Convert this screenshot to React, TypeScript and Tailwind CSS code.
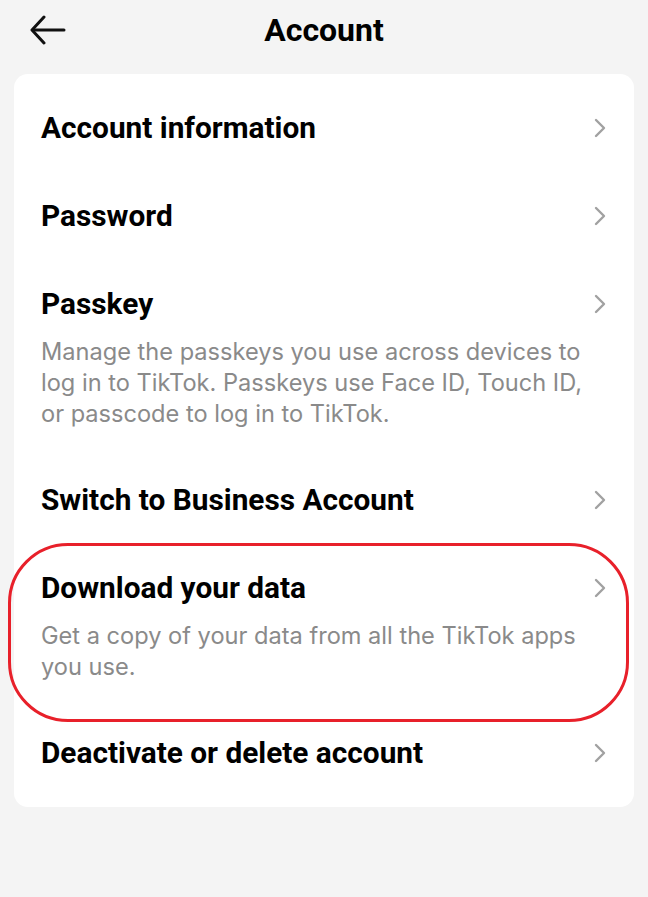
type Item = {
  title: string;
  desc?: string;
  highlight?: boolean;
};

const items: Item[] = [
  { title: 'Account information' },
  { title: 'Password' },
  {
    title: 'Passkey',
    desc: 'Manage the passkeys you use across devices to log in to TikTok. Passkeys use Face ID, Touch ID, or passcode to log in to TikTok.',
  },
  { title: 'Switch to Business Account' },
  {
    title: 'Download your data',
    desc: 'Get a copy of your data from all the TikTok apps you use.',
    highlight: true,
  },
  { title: 'Deactivate or delete account' },
];

function BackArrow() {
  return (
    <svg width="36" height="30" viewBox="0 0 36 30" fill="none" stroke="#111" strokeWidth="3" strokeLinecap="round" strokeLinejoin="round">
      <path d="M34 15H3" />
      <path d="M14 2L2 15l12 13" />
    </svg>
  );
}

function Chevron() {
  return (
    <svg width="12" height="20" viewBox="0 0 12 20" fill="none" stroke="#a1a1a1" strokeWidth="2.4" strokeLinecap="round" strokeLinejoin="round">
      <path d="M2 2l8 8-8 8" />
    </svg>
  );
}

export default function App() {
  return (
    <div className="min-h-[897px] w-full bg-[#f4f4f4] font-['Roboto',sans-serif] text-black">
      <header className="grid h-[60px] grid-cols-[1fr_auto_1fr] items-center">
        <button className="flex items-center pl-[30px]">
          <BackArrow />
        </button>
        <h1 className="text-[32px] font-bold leading-none">Account</h1>
        <div />
      </header>

      <div className="mx-[14px] mt-[14px] rounded-[14px] bg-white py-[10px]">
        {items.map((item) => (
          <div key={item.title} className="relative flex items-start py-[27px] pl-[27px] pr-[28px]">
            <div className="flex-1">
              <div className="text-[29.8px] font-bold leading-[34px]">{item.title}</div>
              {item.desc && (
                <p className="mt-[15px] max-w-[550px] font-['Inter',sans-serif] text-[23.6px] leading-[31px] text-[#8a8a8a]">
                  {item.desc}
                </p>
              )}
            </div>
            <div className="flex h-[34px] items-center">
              <Chevron />
            </div>
            {item.highlight && (
              <div className="pointer-events-none absolute -top-px -bottom-[13px] -left-[6px] right-[5px] rounded-[60px] border-[3px] border-[#e8202a]" />
            )}
          </div>
        ))}
      </div>
    </div>
  );
}
